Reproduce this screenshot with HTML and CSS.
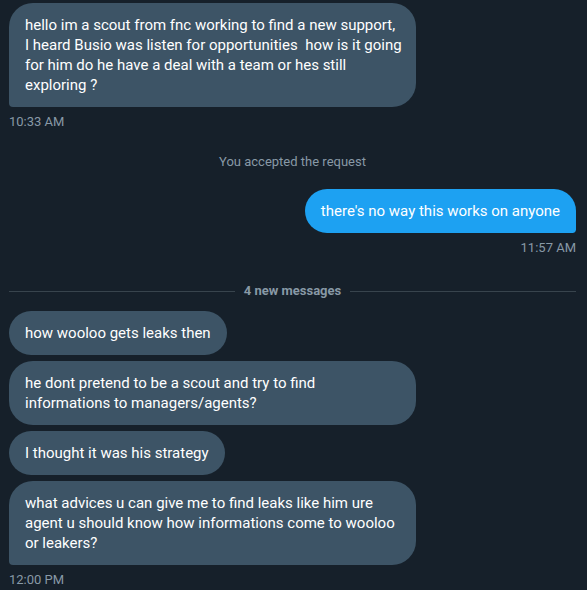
FILE: index.html
```html
<!DOCTYPE html>
<html lang="en">
<head>
<meta charset="utf-8">
<title>Messages</title>
<link rel="stylesheet" href="styles.css">
</head>
<body>
<main class="chat">
  <section class="group received">
    <div class="bubble last preset">hello im a scout from fnc working to find a new support,<br>I heard Busio was listen for opportunities  how is it going<br>for him do he have a deal with a team or hes still<br>exploring ?</div>
    <div class="time">10:33 AM</div>
  </section>

  <div class="notice">You accepted the request</div>

  <section class="group sent">
    <div class="bubble blue last">there's no way this works on anyone</div>
    <div class="time">11:57 AM</div>
  </section>

  <div class="divider"><span class="divider-label">4 new messages</span></div>

  <section class="group received">
    <div class="bubble">how wooloo gets leaks then</div>
    <div class="bubble">he dont pretend to be a scout and try to find informations to managers/agents?</div>
    <div class="bubble">I thought it was his strategy</div>
    <div class="bubble last">what advices u can give me to find leaks like him ure agent u should know how informations come to wooloo or leakers?</div>
    <div class="time">12:00 PM</div>
  </section>
</main>
</body>
</html>
```
FILE: styles.css
```css
* { box-sizing: border-box; }

html, body {
  margin: 0;
  padding: 0;
  background: #16202a;
}

body {
  font-family: Roboto, "Liberation Sans", sans-serif;
  color: #ffffff;
  overflow: hidden;
}

.chat {
  display: flex;
  flex-direction: column;
  padding: 3px 11px 0 9px;
}

.group {
  display: flex;
  flex-direction: column;
  gap: 6px;
}

.group.received { align-items: flex-start; }
.group.sent { align-items: flex-end; }

.bubble {
  max-width: 407px;
  padding: 12px 16px;
  border-radius: 24px;
  background: #3d5466;
  color: #ffffff;
  font-size: 15px;
  line-height: 20px;
  white-space: pre-wrap;
  word-wrap: break-word;
}

.bubble.preset {
  width: 407px;
  white-space: pre;
}

.received .bubble.last { border-bottom-left-radius: 4px; }

.bubble.blue {
  background: #1da1f2;
}

.sent .bubble.last { border-bottom-right-radius: 4px; }

.time {
  margin-top: 1px;
  font-size: 13px;
  line-height: 16px;
  color: #8899a6;
}

.notice {
  margin: 24px 0 19px;
  text-align: center;
  font-size: 13px;
  line-height: 16px;
  color: #8899a6;
}

.divider {
  display: flex;
  align-items: center;
  gap: 9px;
  margin: 27px 0 12px;
  font-size: 13px;
  line-height: 16px;
  color: #8899a6;
}

.divider::before,
.divider::after {
  content: "";
  flex: 1;
  height: 1px;
  background: #38444d;
}

.divider-label {
  font-weight: 700;
}
```
